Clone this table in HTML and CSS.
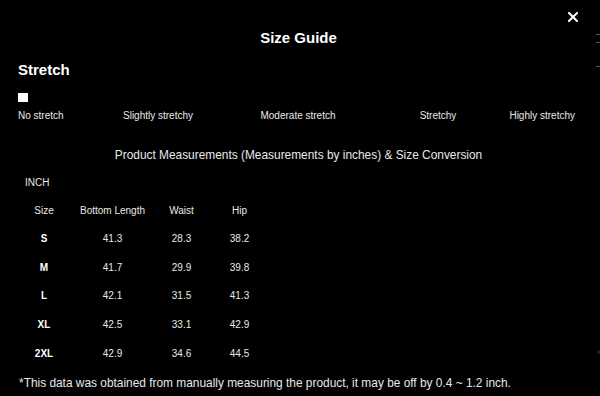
FILE: index.html
```html
<!DOCTYPE html>
<html lang="en">
<head>
<meta charset="utf-8">
<title>Size Guide</title>
<link rel="stylesheet" href="styles.css">
</head>
<body>
<div class="modal">
  <button class="close" aria-label="Close">
    <svg width="10" height="10" viewBox="0 0 10 10"><path d="M1 1L9 9M9 1L1 9" stroke="#fff" stroke-width="2" stroke-linecap="square"/></svg>
  </button>
  <div class="edge">
    <span class="tick t1"></span>
    <span class="tick t2"></span>
    <span class="tick t3"></span>
    <span class="chev">›</span>
  </div>

  <h1 class="title">Size Guide</h1>

  <h2 class="section">Stretch</h2>
  <div class="stretch-marker"></div>
  <div class="stretch-scale">
    <span class="lbl first">No stretch</span>
    <span class="lbl mid2">Slightly stretchy</span>
    <span class="lbl mid3">Moderate stretch</span>
    <span class="lbl mid4">Stretchy</span>
    <span class="lbl last">Highly stretchy</span>
  </div>

  <p class="measure-title">Product Measurements (Measurements by inches) &amp; Size Conversion</p>
  <div class="unit">INCH</div>

  <div class="table">
    <div class="row head">
      <span>Size</span><span>Bottom Length</span><span>Waist</span><span>Hip</span>
    </div>
    <div class="row"><span class="sz">S</span><span>41.3</span><span>28.3</span><span>38.2</span></div>
    <div class="row"><span class="sz">M</span><span>41.7</span><span>29.9</span><span>39.8</span></div>
    <div class="row"><span class="sz">L</span><span>42.1</span><span>31.5</span><span>41.3</span></div>
    <div class="row"><span class="sz">XL</span><span>42.5</span><span>33.1</span><span>42.9</span></div>
    <div class="row"><span class="sz">2XL</span><span>42.9</span><span>34.6</span><span>44.5</span></div>
  </div>

  <p class="note">*This data was obtained from manually measuring the product, it may be off by 0.4 ~ 1.2 inch.</p>
</div>
</body>
</html>
```
FILE: styles.css
```css
html, body {
  margin: 0;
  padding: 0;
  background: #000;
  width: 600px;
  height: 396px;
  overflow: hidden;
}
body {
  font-family: "Liberation Sans", Arial, sans-serif;
  color: #e8e8e8;
}
.modal {
  position: relative;
  width: 600px;
  height: 396px;
  box-sizing: border-box;
  padding: 29px 22px 0 18px;
  display: flex;
  flex-direction: column;
}
.close {
  position: absolute;
  top: 12px;
  right: 22px;
  width: 10px;
  height: 10px;
  padding: 0;
  border: 0;
  background: transparent;
  display: block;
}
.close svg { display: block; }
.edge {
  position: absolute;
  right: 0;
  top: 0;
  width: 4px;
  height: 396px;
}
.tick {
  position: absolute;
  right: 0;
  width: 4px;
  height: 1px;
  background: #555;
}
.t1 { top: 34px; }
.t2 { top: 42px; }
.t3 { top: 66px; }
.chev {
  position: absolute;
  right: 0;
  top: 346px;
  font-size: 9px;
  line-height: 12px;
  color: #666;
}
.title {
  margin: 0;
  font-size: 15px;
  line-height: 18px;
  font-weight: bold;
  color: #fff;
  text-align: center;
  padding-left: 1px;
}
.section {
  margin: 14px 0 0;
  font-size: 15px;
  line-height: 18px;
  font-weight: bold;
  color: #fff;
}
.stretch-marker {
  margin-top: 14px;
  width: 10px;
  height: 9px;
  background: #fff;
}
.stretch-scale {
  margin-top: 7.5px;
  width: 560px;
  display: grid;
  grid-template-columns: repeat(8, 70px);
  font-size: 10px;
  line-height: 12px;
  white-space: nowrap;
}
.lbl { display: block; }
.first { grid-column: 1; justify-self: start; }
.mid2 { grid-column: 2 / span 2; justify-self: center; }
.mid3 { grid-column: 4 / span 2; justify-self: center; }
.mid4 { grid-column: 6 / span 2; justify-self: center; }
.last { grid-column: 8; justify-self: end; margin-right: 3px; }
.measure-title {
  margin: 26px 0 0;
  font-size: 11.9px;
  line-height: 14px;
  text-align: center;
  padding-left: 1px;
}
.unit {
  margin: 15.5px 0 0 7px;
  font-size: 10px;
  line-height: 12px;
}
.table {
  margin-top: 8.5px;
  display: flex;
  flex-direction: column;
  font-size: 10px;
  line-height: 12px;
}
.row {
  display: grid;
  grid-template-columns: 52px 85px 53px 63px;
  align-items: center;
  text-align: center;
  height: 28.6px;
}
.row.head { height: 27.5px; }
.sz { font-weight: bold; color: #fff; }
.note {
  margin: 8px 0 0 1px;
  font-size: 11.9px;
  line-height: 14px;
  white-space: nowrap;
}
```
